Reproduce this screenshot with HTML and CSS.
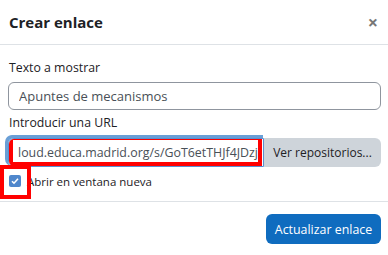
FILE: index.html
```html
<!DOCTYPE html>
<html>
<head>
  <title>Crear enlace</title>
  <link rel="stylesheet" href="styles.css">
</head>
<body>
  <div class="modal">
    <div class="modal-header">
      <h2>Crear enlace</h2>
      <span class="close">&times;</span>
    </div>

    <div class="modal-body">
      <label for="text">Texto a mostrar</label>
      <input type="text" id="text" class="field" value="Apuntes de mecanismos">

      <label for="url" class="url-label">Introducir una URL</label>
      <div class="input-group">
        <div class="url-box">
          <span class="url-text">loud.educa.madrid.org/s/GoT6etTHJf4JDzj</span>
          <div class="mark mark-url"></div>
        </div>
        <button class="btn-grey">Ver repositorios...</button>
      </div>

      <div class="check-row">
        <span class="checkbox">
          <svg width="12" height="12" viewBox="0 0 12 12"><path d="M3 6.2l2 2 4-4.4" fill="none" stroke="#fff" stroke-width="1.6"/></svg>
        </span>
        <span>Abrir en ventana nueva</span>
        <div class="mark mark-check"></div>
      </div>
    </div>

    <div class="modal-footer">
      <button class="btn-primary">Actualizar enlace</button>
    </div>
  </div>
</body>
</html>
```

FILE: styles.css
```css
body {
  margin: 0;
  font-family: "Open Sans", sans-serif;
  color: #1d2125;
  background: #fff;
}
.modal {
  width: 388px;
}
.modal-header {
  height: 45px;
  box-sizing: border-box;
  border-bottom: 1px solid #dee2e6;
  display: flex;
  align-items: center;
  justify-content: space-between;
  padding: 0 10px 0 9px;
}
.modal-header h2 {
  margin: 0;
  font-size: 15px;
  font-weight: 700;
}
.close {
  font-size: 18px;
  font-weight: 700;
  color: #777;
  line-height: 1;
}
.modal-body {
  padding: 13px 7px 0 8px;
  position: relative;
}
label {
  display: block;
  font-size: 12.3px;
  margin-left: 1px;
  line-height: 20px;
}
.field {
  display: block;
  width: 100%;
  box-sizing: border-box;
  height: 28px;
  margin-top: 4px;
  border: 1px solid #8f959e;
  border-radius: 6px;
  padding: 0 10px;
  font-family: "Open Sans", sans-serif;
  font-size: 13px;
  color: #495057;
}
.url-label {
  margin-top: 3px;
}
.input-group {
  display: flex;
  margin-top: 5px;
  height: 29px;
}
.url-box {
  position: relative;
  flex: 1;
  border: 1px solid #5a8fd0;
  border-radius: 6px 0 0 6px;
  box-shadow: -2px -2px 0 1px #6a9fd6;
  display: flex;
  align-items: center;
  overflow: hidden;
  padding-left: 9px;
  font-size: 12.4px;
  color: #495057;
  white-space: nowrap;
}
.btn-grey {
  width: 117px;
  border: none;
  background: #ced4da;
  border-radius: 0 6px 6px 0;
  font-family: "Open Sans", sans-serif;
  font-size: 12px;
  color: #1d2125;
  padding: 0;
}
.check-row {
  display: flex;
  align-items: center;
  gap: 6px;
  font-size: 11.5px;
  margin-top: 4px;
  height: 20px;
  padding-left: 1px;
}
.checkbox {
  width: 12px;
  height: 12px;
  border-radius: 2px;
  background: #4f87cc;
  display: flex;
  align-items: center;
  justify-content: center;
}
.mark {
  position: absolute;
  border: 4px solid #ff0000;
  box-sizing: border-box;
}
.mark-url {
  left: 0;
  top: -3px;
  width: 253px;
  height: 30px;
}
.mark-check {
  left: 0;
  top: 120px;
  width: 31px;
  height: 34px;
}
.modal-footer {
  margin-top: 10px;
  border-top: 1px solid #dee2e6;
  display: flex;
  justify-content: flex-end;
  padding: 12px 7px 0 0;
}
.btn-primary {
  background: #0f6cbf;
  color: #fff;
  border: none;
  border-radius: 6px;
  height: 30px;
  width: 115px;
  font-family: "Open Sans", sans-serif;
  font-size: 12.4px;
}
```
